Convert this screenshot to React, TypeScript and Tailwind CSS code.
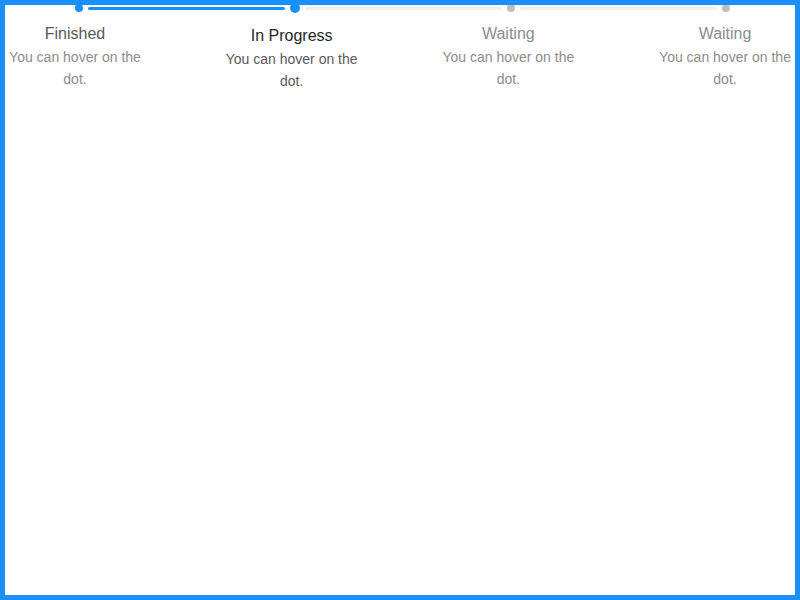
import React from 'react';

type Status = 'finish' | 'process' | 'wait';

const steps: { title: string; status: Status }[] = [
  { title: 'Finished', status: 'finish' },
  { title: 'In Progress', status: 'process' },
  { title: 'Waiting', status: 'wait' },
  { title: 'Waiting', status: 'wait' },
];

const titleColor: Record<Status, string> = {
  finish: 'text-[#595959]',
  process: 'text-[#262626]',
  wait: 'text-[#8c8c8c]',
};

const descColor: Record<Status, string> = {
  finish: 'text-[#8c8c8c]',
  process: 'text-[#595959]',
  wait: 'text-[#8c8c8c]',
};

const Dot: React.FC<{ status: Status }> = ({ status }) => {
  if (status === 'process') {
    return <span className="block w-[10px] h-[10px] rounded-full bg-[#1890ff] shrink-0" />;
  }
  return (
    <span
      className={
        'block w-[8px] h-[8px] mt-[1px] rounded-full shrink-0 ' +
        (status === 'finish' ? 'bg-[#1890ff]' : 'bg-[#bfbfbf]')
      }
    />
  );
};

const App: React.FC = () => {
  return (
    <div className="relative h-[600px] bg-white" style={{ fontFamily: '"Liberation Sans", Arial, sans-serif' }}>
      <div className="px-[5px] pt-[3px]">
        {/* dots and tails */}
        <div className="flex items-start h-[10px] pl-[70px] pr-[65px]">
          {steps.map((s, i) => (
            <React.Fragment key={i}>
              <Dot status={s.status} />
              {i < steps.length - 1 && (
                <span
                  className={
                    'block flex-1 h-[3px] mt-[4px] mx-[5px] rounded-sm ' +
                    (s.status === 'finish' ? 'bg-[#1890ff]' : 'bg-[#f0f0f0]')
                  }
                />
              )}
            </React.Fragment>
          ))}
        </div>

        {/* labels */}
        <div className="flex">
          {steps.map((s, i) => (
            <div key={i} className={i < steps.length - 1 ? 'flex-1' : 'w-[140px]'}>
              <div className={'w-[140px] text-center ' + (s.status === 'process' ? 'pt-[11px]' : 'pt-[9px]')}>
                <div className={'text-[16px] leading-[24px] ' + titleColor[s.status]}>{s.title}</div>
                <div className={'text-[14px] leading-[22px] ' + descColor[s.status]}>You can hover on the dot.</div>
              </div>
            </div>
          ))}
        </div>
      </div>

      {/* frame */}
      <div className="pointer-events-none absolute inset-0 border-[5px] border-[#1890ff]" />
    </div>
  );
};

export default App;
